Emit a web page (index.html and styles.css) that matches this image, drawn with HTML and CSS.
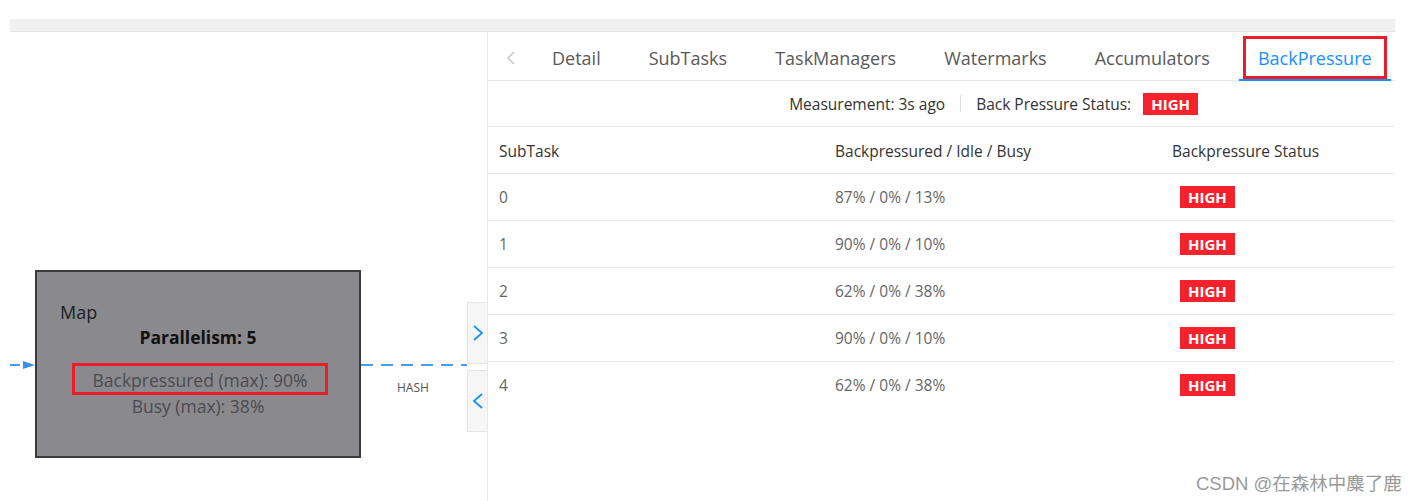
FILE: index.html
```html
<!DOCTYPE html>
<html>
<head>
<meta charset="utf-8">
<link rel="stylesheet" href="styles.css">
</head>
<body>
<div class="page">
  <div class="topbar"></div>
  <div class="main">
    <div class="canvas">
      <svg class="edges" width="477" height="469" viewBox="0 0 477 469">
        <line x1="0" y1="333" x2="10" y2="333" stroke="#4a9af0" stroke-width="2"/>
        <polygon points="13,329 25,333 13,337" fill="#3a8ef0"/>
        <line x1="351" y1="333" x2="457" y2="333" stroke="#4a9af0" stroke-width="2" stroke-dasharray="12,8"/>
      </svg>
      <div class="node">
        <div class="node-title">Map</div>
        <div class="node-par">Parallelism: 5</div>
        <div class="node-bp">Backpressured (max): 90%</div>
        <div class="node-busy">Busy (max): 38%</div>
      </div>
      <div class="edge-label">HASH</div>
      <div class="toggles">
        <div class="toggle"><svg width="12" height="18" viewBox="0 0 12 18"><path d="M2 2 L10 9 L2 16" fill="none" stroke="#1890ff" stroke-width="1.8"/></svg></div>
        <div class="toggle"><svg width="12" height="18" viewBox="0 0 12 18"><path d="M10 2 L2 9 L10 16" fill="none" stroke="#1890ff" stroke-width="1.8"/></svg></div>
      </div>
    </div>
    <div class="pane">
      <div class="tabs">
        <div class="tab-prev"><svg width="8" height="14" viewBox="0 0 8 14"><path d="M7 1 L1 7 L7 13" fill="none" stroke="#bfbfbf" stroke-width="1.3"/></svg></div>
        <div class="tab">Detail</div>
        <div class="tab">SubTasks</div>
        <div class="tab">TaskManagers</div>
        <div class="tab">Watermarks</div>
        <div class="tab">Accumulators</div>
        <div class="tab active"><span class="hl">BackPressure</span></div>
      </div>
      <div class="status">
        <span>Measurement: 3s ago</span>
        <span class="sep"></span>
        <span>Back Pressure Status:</span>
        <span class="badge">HIGH</span>
      </div>
      <div class="table">
        <div class="row head">
          <div class="c1">SubTask</div>
          <div class="c2">Backpressured / Idle / Busy</div>
          <div class="c3">Backpressure Status</div>
        </div>
        <div class="row">
          <div class="c1">0</div><div class="c2">87% / 0% / 13%</div><div class="c3"><span class="badge">HIGH</span></div>
        </div>
        <div class="row">
          <div class="c1">1</div><div class="c2">90% / 0% / 10%</div><div class="c3"><span class="badge">HIGH</span></div>
        </div>
        <div class="row">
          <div class="c1">2</div><div class="c2">62% / 0% / 38%</div><div class="c3"><span class="badge">HIGH</span></div>
        </div>
        <div class="row">
          <div class="c1">3</div><div class="c2">90% / 0% / 10%</div><div class="c3"><span class="badge">HIGH</span></div>
        </div>
        <div class="row last">
          <div class="c1">4</div><div class="c2">62% / 0% / 38%</div><div class="c3"><span class="badge">HIGH</span></div>
        </div>
      </div>
    </div>
  </div>
</div>
<div class="watermark">CSDN @在森林中麋了鹿</div>
</body>
</html>
```

FILE: styles.css
```css
html, body {
  margin: 0;
  padding: 0;
  background: #ffffff;
  font-family: "Open Sans", "Noto Sans", "Noto Sans CJK SC", sans-serif;
  width: 1422px;
  height: 501px;
  overflow: hidden;
}
.page {
  margin-left: 10px;
  padding-top: 19px;
  width: 1385px;
}
.topbar {
  height: 12px;
  background: #f0f0f0;
  border-bottom: 1px solid #e4e4e4;
}
.main {
  display: flex;
  height: 469px;
}
.canvas {
  position: relative;
  width: 477px;
  height: 469px;
}
.edges {
  position: absolute;
  left: 0;
  top: 0;
}
.node {
  position: absolute;
  left: 25px;
  top: 238px;
  width: 322px;
  height: 184px;
  background: #8a898e;
  border: 2px solid #3b3b3e;
  color: #222;
}
.node-title {
  position: absolute;
  left: 23px;
  top: 28px;
  font-size: 18px;
  color: #1e1e22;
}
.node-par {
  position: absolute;
  left: 0;
  right: 0;
  top: 53px;
  text-align: center;
  font-size: 17.5px;
  font-weight: 700;
  color: #111;
}
.node-bp {
  position: absolute;
  left: 35px;
  top: 91px;
  width: 250px;
  height: 26px;
  border: 3px solid #ec1c2a;
  text-align: center;
  font-size: 17.5px;
  line-height: 28px;
  color: #4c4b52;
  white-space: nowrap;
}
.node-busy {
  position: absolute;
  left: 0;
  right: 0;
  top: 122px;
  text-align: center;
  font-size: 17.5px;
  color: #4c4b52;
}
.edge-label {
  position: absolute;
  left: 387px;
  top: 347px;
  font-size: 12px;
  color: #555;
}
.toggles {
  position: absolute;
  left: 457px;
  top: 270px;
  display: flex;
  flex-direction: column;
  gap: 6px;
}
.toggle {
  width: 19px;
  height: 60px;
  background: #f6f6f6;
  border: 1px solid #e6e6e6;
  border-right: none;
  display: flex;
  align-items: center;
  justify-content: center;
}
.pane {
  width: 907px;
  border-left: 1px solid #e8e8e8;
}
.tabs {
  display: flex;
  align-items: stretch;
  height: 48px;
  border-bottom: 1px solid #e8e8e8;
  font-size: 18px;
  color: #595959;
}
.tab-prev {
  width: 40px;
  box-sizing: border-box;
  display: flex;
  align-items: center;
  justify-content: center;
  padding-left: 6px;
  padding-top: 3px;
}
.tab {
  padding: 3px 24px 0;
  display: flex;
  align-items: center;
  white-space: nowrap;
}
.tab.active {
  color: #1890ff;
  padding: 0;
  margin-left: 5px;
  width: 152px;
  justify-content: center;
  border-bottom: 2px solid #1890ff;
  margin-bottom: -1px;
  position: relative;
}
.hl {
  display: flex;
  align-items: center;
  justify-content: center;
  width: 138px;
  height: 36px;
  border: 3px solid #ec1c2a;
  margin-top: 3px;
  padding-top: 1px;
  box-sizing: content-box;
}
.status {
  display: flex;
  align-items: center;
  justify-content: flex-end;
  padding-right: 197px;
  height: 45px;
  border-bottom: 1px solid #e8e8e8;
  font-size: 15.5px;
  color: #333;
}
.sep {
  width: 1px;
  height: 17px;
  background: #e0e0e0;
  margin: 0 15px;
}
.badge {
  display: inline-block;
  background: #f5222d;
  color: #ffffff;
  font-weight: 700;
  font-size: 15px;
  line-height: 22px;
  padding: 0 8px;
  margin-left: 12px;
}
.row {
  display: flex;
  align-items: center;
  height: 46px;
  border-bottom: 1px solid #e8e8e8;
  font-size: 15.5px;
  color: #666;
}
.row.last {
  border-bottom: none;
}
.row.head {
  color: #333;
  padding-top: 1px;
  height: 45px;
}
.c1 {
  width: 336px;
  padding-left: 11px;
  box-sizing: border-box;
}
.c2 {
  width: 337px;
  padding-left: 11px;
  box-sizing: border-box;
}
.c3 {
  padding-left: 11px;
}
.row .c3 .badge {
  margin-left: 8px;
}
.watermark {
  position: absolute;
  left: 1196px;
  top: 469px;
  font-size: 18.5px;
  color: #9a9a9a;
  font-family: "Liberation Sans", "Noto Sans CJK SC", sans-serif;
}
```
